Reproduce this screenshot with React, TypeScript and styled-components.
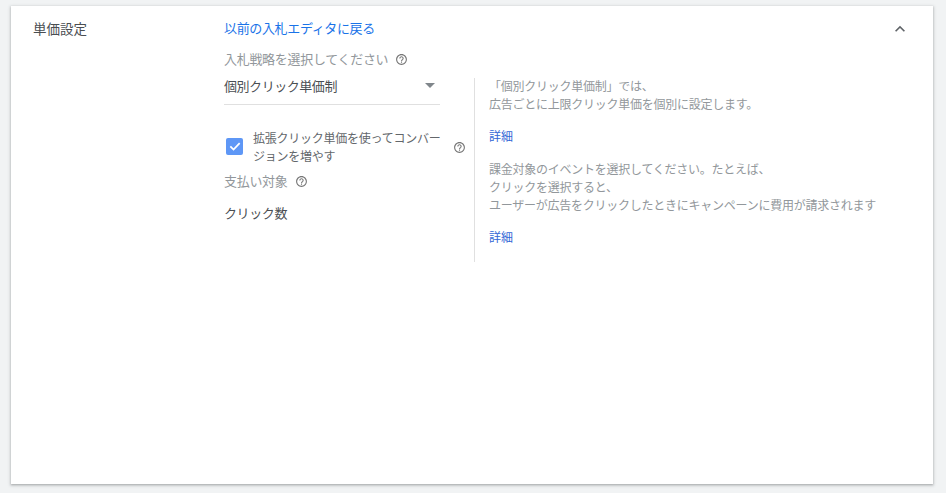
import React from 'react'
import styled, { createGlobalStyle } from 'styled-components'

const GlobalStyle = createGlobalStyle`
    html, body {
        margin: 0;
        padding: 0;
        height: 100%;
        overflow: hidden;
        background: #f1f3f4;
    }
    body {
        font-family: 'Noto Sans CJK JP', 'Noto Sans', sans-serif;
        color: #3c4043;
    }
`

const Page = styled.div`
    height: 493px;
    box-sizing: border-box;
    padding: 6px 13px 9px 11px;
`

const Card = styled.section`
    position: relative;
    display: grid;
    grid-template-columns: 191px 1fr;
    height: 100%;
    box-sizing: border-box;
    padding: 12px 0 0 22px;
    background: #fff;
    box-shadow: 0 1px 2px rgba(60, 64, 67, 0.3), 0 1px 3px 1px rgba(60, 64, 67, 0.15);
`

const SectionTitle = styled.h2`
    margin: 0;
    font-size: 13.5px;
    font-weight: 400;
    line-height: 20px;
    color: #4a4e52;
`

const Content = styled.div`
    display: flex;
    flex-direction: column;
    align-items: flex-start;
`

const BackLink = styled.a`
    font-size: 13px;
    letter-spacing: -0.35px;
    line-height: 20px;
    color: #1a73e8;
    text-decoration: none;
`

const Columns = styled.div`
    display: flex;
`

const Controls = styled.div`
    width: 250px;
    box-sizing: border-box;
`

const FieldLabel = styled.div<{ $top?: number }>`
    display: flex;
    align-items: center;
    gap: 7px;
    margin-top: ${(props) => props.$top ?? 0}px;
    font-size: 13px;
    letter-spacing: -0.3px;
    line-height: 20px;
    color: #92979b;
`

const Select = styled.div`
    display: flex;
    align-items: center;
    justify-content: space-between;
    width: 216px;
    height: 36px;
    box-sizing: border-box;
    padding: 0 5px 3px 0;
    border-bottom: 1px solid #e0e0e0;
    font-size: 13px;
    letter-spacing: -0.45px;
    color: #4a4e52;
`

const Caret = styled.span`
    width: 0;
    height: 0;
    border-left: 5px solid transparent;
    border-right: 5px solid transparent;
    border-top: 5px solid #80868b;
`

const CheckRow = styled.label`
    display: flex;
    align-items: center;
    width: 245px;
    height: 36px;
    margin-top: 24px;
    padding-left: 2px;
    box-sizing: border-box;
`

const CheckBox = styled.span`
    flex: none;
    display: flex;
    align-items: center;
    justify-content: center;
    width: 17px;
    height: 17px;
    border-radius: 2px;
    background: #5e97f6;
    margin: 0 10px 2px 0;
`

const CheckText = styled.span`
    flex: none;
    width: 190px;
    margin-right: 10px;
    font-size: 12px;
    letter-spacing: -0.25px;
    line-height: 18px;
    color: #63676b;
`

const PayValue = styled.div`
    margin-top: 12px;
    font-size: 13px;
    letter-spacing: -0.4px;
    line-height: 20px;
    color: #4a4e52;
`

const Help = styled.div`
    height: 184px;
    box-sizing: border-box;
    margin-top: 9px;
    padding-left: 14px;
    border-left: 1px solid #e0e0e0;
    font-size: 12px;
    letter-spacing: -0.25px;
    line-height: 18px;
    color: #92979b;
`

const HelpBlock = styled.p`
    margin: 0 0 14px;

    &:first-child {
        margin-top: -1px;
    }
`

const HelpLink = styled.a`
    display: block;
    margin: 0 0 15px;
    letter-spacing: 0;
    line-height: 18px;
    color: #3367d6;
    text-decoration: none;
`

const CollapseButton = styled.button`
    position: absolute;
    top: 13px;
    right: 23px;
    padding: 0;
    border: 0;
    background: none;
    display: flex;
    color: #5f6368;
`

const HelpIcon = () => (
    <svg width="13" height="13" viewBox="0 0 24 24" fill="#757575">
        <path d="M11 18h2v-2h-2v2zm1-16C6.48 2 2 6.48 2 12s4.48 10 10 10 10-4.48 10-10S17.52 2 12 2zm0 18c-4.41 0-8-3.59-8-8s3.59-8 8-8 8 3.59 8 8-3.59 8-8 8zm0-14c-2.21 0-4 1.79-4 4h2c0-1.1.9-2 2-2s2 .9 2 2c0 2-3 1.75-3 5h2c0-2.25 3-2.5 3-5 0-2.21-1.79-4-4-4z" />
    </svg>
)

const App = () => {
    return (
        <Page>
            <GlobalStyle />
            <Card>
                <SectionTitle>単価設定</SectionTitle>
                <Content>
                    <BackLink href="#">以前の入札エディタに戻る</BackLink>
                    <FieldLabel $top={11}>
                        入札戦略を選択してください <HelpIcon />
                    </FieldLabel>
                    <Columns>
                        <Controls>
                            <Select>
                                個別クリック単価制
                                <Caret />
                            </Select>
                            <CheckRow>
                                <CheckBox>
                                    <svg width="14" height="14" viewBox="0 0 24 24" fill="none" stroke="#fff" strokeWidth="3">
                                        <path d="M4 12.5l5.5 5.5L20 7" />
                                    </svg>
                                </CheckBox>
                                <CheckText>拡張クリック単価を使ってコンバージョンを増やす</CheckText>
                                <HelpIcon />
                            </CheckRow>
                            <FieldLabel $top={6}>
                                支払い対象 <HelpIcon />
                            </FieldLabel>
                            <PayValue>クリック数</PayValue>
                        </Controls>
                        <Help>
                            <HelpBlock>
                                「個別クリック単価制」では、
                                <br />
                                広告ごとに上限クリック単価を個別に設定します。
                            </HelpBlock>
                            <HelpLink href="#">詳細</HelpLink>
                            <HelpBlock>
                                課金対象のイベントを選択してください。たとえば、
                                <br />
                                クリックを選択すると、
                                <br />
                                ユーザーが広告をクリックしたときにキャンペーンに費用が請求されます
                            </HelpBlock>
                            <HelpLink href="#">詳細</HelpLink>
                        </Help>
                    </Columns>
                </Content>
                <CollapseButton aria-label="閉じる">
                    <svg width="20" height="20" viewBox="0 0 24 24" fill="currentColor">
                        <path d="M7.41 15.41 12 10.83l4.59 4.58L18 14l-6-6-6 6z" />
                    </svg>
                </CollapseButton>
            </Card>
        </Page>
    )
}

export default App
